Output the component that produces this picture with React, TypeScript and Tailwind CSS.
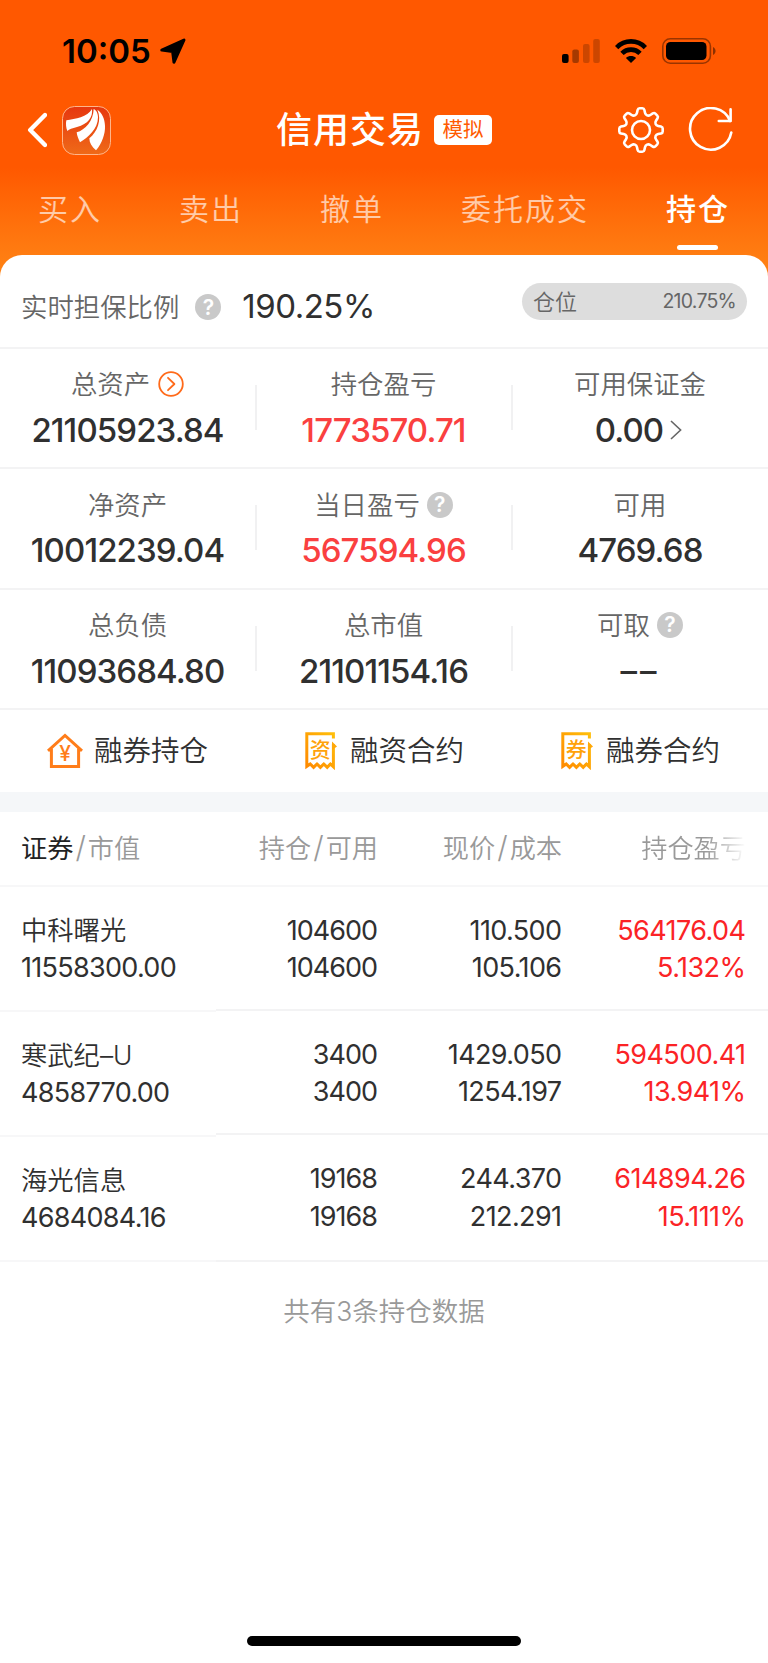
import { ReactNode } from 'react';

const TABS = [
  { id: 'buy', label: '买入' },
  { id: 'sell', label: '卖出' },
  { id: 'cancel', label: '撤单' },
  { id: 'orders', label: '委托成交' },
  { id: 'positions', label: '持仓' },
] as const;

type Stat = { label: string; value: string; red?: boolean; help?: boolean; detail?: boolean; more?: boolean };

const STATS: Stat[][] = [
  [
    { label: '总资产', value: '21105923.84', detail: true },
    { label: '持仓盈亏', value: '1773570.71', red: true },
    { label: '可用保证金', value: '0.00', more: true },
  ],
  [
    { label: '净资产', value: '10012239.04' },
    { label: '当日盈亏', value: '567594.96', red: true, help: true },
    { label: '可用', value: '4769.68' },
  ],
  [
    { label: '总负债', value: '11093684.80' },
    { label: '总市值', value: '21101154.16' },
    { label: '可取', value: '––', help: true },
  ],
];

const HOLDINGS = [
  { name: '中科曙光', value: '11558300.00', qty: '104600', avail: '104600', price: '110.500', cost: '105.106', pnl: '564176.04', pct: '5.132%' },
  { name: '寒武纪–U', value: '4858770.00', qty: '3400', avail: '3400', price: '1429.050', cost: '1254.197', pnl: '594500.41', pct: '13.941%' },
  { name: '海光信息', value: '4684084.16', qty: '19168', avail: '19168', price: '244.370', cost: '212.291', pnl: '614894.26', pct: '15.111%' },
];

// eight-toothed gear outline around 0,0
function gearPath() {
  const parts: string[] = [];
  for (let i = 0; i < 8; i++) {
    const a = (i * Math.PI) / 4;
    const p = (x: number, y: number, rot = a) =>
      `${(x * Math.cos(rot) - y * Math.sin(rot)).toFixed(2)} ${(x * Math.sin(rot) + y * Math.cos(rot)).toFixed(2)}`;
    const next = a + Math.PI / 4;
    parts.push(`${i === 0 ? 'M' : 'L'}${p(-4, -17.2)}`);
    parts.push(`L${p(-3.4, -20)} Q${p(-3, -21.7)} ${p(-1.4, -21.7)} L${p(1.4, -21.7)} Q${p(3, -21.7)} ${p(3.4, -20)} L${p(4, -17.2)}`);
    parts.push(`C${p(4.6, -14.6)} ${p(-4.6, -14.6, next)} ${p(-4, -17.2, next)}`);
  }
  return parts.join(' ') + 'Z';
}

function HelpIcon() {
  return (
    <span className="flex size-[26px] items-center justify-center rounded-full bg-[#c9c9c9] text-[21px] leading-none font-semibold text-white">
      ?
    </span>
  );
}

function BrandLogo() {
  return (
    <svg className="ml-[15px] size-[49px]" viewBox="186 318 147 147">
      <defs>
        <linearGradient id="brand" x1="0" y1="0" x2="0" y2="1">
          <stop offset="0" stopColor="#e6370f" />
          <stop offset="1" stopColor="#ef6a18" />
        </linearGradient>
      </defs>
      <rect x="187.5" y="319.5" width="144" height="144" rx="36" fill="url(#brand)" stroke="#ffb58a" strokeWidth="3" />
      <g fill="#fff">
        <path d="M199 361C226 356 262 352 276 327C279 352 264 372 231 381C216 385 208 388 202 393C198 385 197 370 199 361Z" />
        <path d="M281 327C280 362 256 390 230 397C231 408 236 418 240 427C264 412 294 387 294 352C294 340 289 330 281 327Z" />
        <path d="M292 329C306 360 292 395 268 415C268 428 275 440 288 451C306 430 316 402 315 377C314 355 306 338 292 329Z" />
      </g>
    </svg>
  );
}

function StatusBar() {
  return (
    <div className="flex h-[102px] items-center justify-between pr-[52px] pl-[62px] text-black">
      <div className="flex items-center">
        <span className="text-[33px] leading-none font-semibold">10:05</span>
        <svg className="ml-[9px] size-[26px]" viewBox="0 0 26 26">
          <path d="M24 2L14 24.2L12.6 13.4L1.8 12Z" fill="#000" stroke="#000" strokeWidth="3" strokeLinejoin="round" />
        </svg>
      </div>
      <div className="flex items-center">
        <svg className="h-6 w-[38px]" viewBox="0 0 38 24">
          <rect x="0" y="15" width="6.6" height="9" rx="2" />
          <rect x="10.3" y="10.5" width="6.6" height="13.5" rx="2" opacity="0.35" />
          <rect x="21" y="5" width="6.6" height="19" rx="2" opacity="0.2" />
          <rect x="31.2" y="0" width="6.6" height="24" rx="2" opacity="0.2" />
        </svg>
        <svg className="ml-[15px] h-6 w-8" viewBox="0 0 32 24" fill="none" stroke="#000" strokeWidth="4.7">
          <path d="M1.6 8.6C9.6.4 22.4.4 30.4 8.6" />
          <path d="M7 14.4C12 9.4 20 9.4 25 14.4" />
          <path d="M16 24L10.9 18.9C13.8 16.3 18.2 16.3 21.1 18.9Z" fill="#000" stroke="none" />
        </svg>
        <svg className="ml-[15px] h-[26px] w-[54px]" viewBox="0 0 54 26">
          <rect x="0.8" y="0.8" width="47.6" height="24.4" rx="7.5" fill="none" stroke="#000" strokeOpacity="0.4" strokeWidth="1.6" />
          <rect x="4" y="4" width="40.5" height="18" rx="4.5" />
          <path d="M51 9C54.4 10.6 54.4 15.4 51 17Z" opacity="0.45" />
        </svg>
      </div>
    </div>
  );
}

function TitleBar() {
  return (
    <div className="flex h-14 items-center pr-[33px] pl-[27px]">
      <svg className="h-9 w-5" viewBox="0 0 20 36" fill="none" stroke="#fff" strokeWidth="4.4" strokeLinecap="round" strokeLinejoin="round">
        <path d="M18 3L3.2 18L18 33" />
      </svg>
      <BrandLogo />
      <h1 className="ml-[165px] text-[36px] leading-none font-medium tracking-[1px] whitespace-nowrap text-white">信用交易</h1>
      <span className="ml-[10px] flex h-[30px] w-[58px] items-center justify-center rounded-[5px] bg-white text-[20.5px] leading-none text-[#ff5a00]">
        模拟
      </span>
      <svg className="ml-[126px] size-[46px]" viewBox="-23 -23 46 46" fill="none" stroke="#fff" strokeWidth="2.6" strokeLinejoin="round">
        <path d={gearPath()} />
        <circle r="9" />
      </svg>
      <svg className="ml-6 h-[46px] w-[46px]" viewBox="-22.5 -23 46 46" fill="none" stroke="#fff" strokeWidth="2.6" strokeLinecap="round" strokeLinejoin="round">
        <path d="M20.8 2.6A20.8 20.8 0 1 1 19.6 -9" />
        <path d="M20.1 -20.6V-9H8.3" />
      </svg>
    </div>
  );
}

function TabBar() {
  return (
    <nav className="flex h-[97px] items-start justify-between pt-[33px] pr-[40px] pl-[38px]">
      {TABS.map((tab) => (
        <div key={tab.id} className="flex flex-col items-center">
          <span
            className={`-mr-[2px] text-[30px] leading-[36px] tracking-[2px] whitespace-nowrap ${
              tab.id === 'positions' ? 'font-medium text-white' : 'font-[350] text-white/65'
            }`}
          >
            {tab.label}
          </span>
          {tab.id === 'positions' && <span className="mt-[18px] h-[5px] w-[41px] rounded-full bg-white" />}
        </div>
      ))}
    </nav>
  );
}

function StatCell({ stat }: { stat: Stat }) {
  return (
    <div className="flex flex-1 flex-col items-center pt-[20.4px]">
      <div className="flex h-[30px] items-center text-[26.4px] leading-[30px] font-[350] text-[#666]">
        {stat.label}
        {stat.detail && (
          <svg className="ml-[8px] size-[26px]" viewBox="0 0 26 26" fill="none" stroke="#ff6a1a" strokeWidth="1.8" strokeLinecap="round" strokeLinejoin="round">
            <circle cx="13" cy="13" r="11.8" />
            <path d="M10 6.8L16.4 13L10 19.2" />
          </svg>
        )}
        {stat.help && (
          <span className="ml-[7px]">
            <HelpIcon />
          </span>
        )}
      </div>
      <div
        className={`mt-[12.6px] flex h-[36px] items-center text-[33px] leading-[36px] font-medium ${
          stat.value === '––' ? 'tracking-[3px]' : 'tracking-[-0.9px]'
        } ${stat.red ? 'text-[#fa4040]' : 'text-[#303030]'}`}
      >
        {stat.value}
        {stat.more && (
          <svg className="mr-[3px] ml-[7px] h-5 w-3" viewBox="0 0 12 20" fill="none" stroke="#666" strokeWidth="1.6">
            <path d="M1 1L10.6 10L1 19" />
          </svg>
        )}
      </div>
    </div>
  );
}

function ReceiptIcon({ char }: { char: string }) {
  return (
    <svg className="h-[38px] w-8" viewBox="0 0 32 38">
      <defs>
        <linearGradient id={`receipt-${char}`} x1="0" y1="1" x2="1" y2="0">
          <stop offset="0" stopColor="#ff8a00" />
          <stop offset="1" stopColor="#ffbe0a" />
        </linearGradient>
      </defs>
      <g fill="none" stroke={`url(#receipt-${char})`} strokeWidth="3">
        <path d="M28.4 6.5V1.8H1.8V34.4L5.2 32L8.6 35.4L12 32L15.4 35.4L18.8 32L22.2 35.4L25.4 32L28.4 34.8V12" />
      </g>
      <path d="M27 9.5L32 14.5L27 18Z" fill="#ffa808" />
      <text x="15.2" y="24.6" textAnchor="middle" fontSize="21" fontWeight="500" fill="#ffa20a">
        {char}
      </text>
    </svg>
  );
}

function HouseIcon() {
  return (
    <svg className="h-[36px] w-9" viewBox="0 0 36 36" fill="none" stroke="#ff7d1a" strokeWidth="3">
      <path d="M1 17.8L18 2.4L35 17.8" />
      <path d="M4.4 15.5V33.4H31.6V15.5" />
      <text x="18" y="27.5" textAnchor="middle" fontSize="21" fontWeight="500" fill="#ff7d1a" stroke="none">
        ¥
      </text>
    </svg>
  );
}

function Shortcut({ icon, label }: { icon: ReactNode; label: string }) {
  return (
    <div className="flex w-64 items-center pl-[46px]">
      <span className="flex w-[37px] justify-center">{icon}</span>
      <span className="ml-[11px] text-[28.5px] leading-none font-[350] whitespace-nowrap text-[#303030]">{label}</span>
    </div>
  );
}

function Cell({ top, bottom, className }: { top: string; bottom: string; className: string }) {
  return (
    <div className={`flex flex-col text-right text-[27px] leading-[37.3px] ${className}`}>
      <span>{top}</span>
      <span>{bottom}</span>
    </div>
  );
}

function Slash() {
  return <span className="mx-[2px] text-[30px] leading-none font-light">/</span>;
}

function Holdings() {
  return (
    <section>
      <div className="flex h-[75px] items-center border-b-2 border-[#f7f7f8] pt-[2px] text-[26.2px] leading-[34px] font-[350] text-[#999]">
        <div className="w-[216px] pl-[21px]">
          <span className="font-normal text-[#222]">证券</span>
          <Slash />
          市值
        </div>
        <div className="w-[162px] text-right">
          持仓
          <Slash />
          可用
        </div>
        <div className="w-[184px] text-right">
          现价
          <Slash />
          成本
        </div>
        <div className="w-[184px] bg-linear-to-r from-[#999] from-78% to-white bg-clip-text text-right text-transparent">
          持仓盈亏
        </div>
      </div>
      <div className="flex text-[#303030]">
        <div className="w-[216px]">
          {HOLDINGS.map((h) => (
            <div key={h.name} className="flex h-[125px] flex-col border-b-2 border-[#f7f7f8] pt-[25px] pl-[21px] leading-[37.3px]">
              <span className="text-[26.3px] font-[350]">{h.name}</span>
              <span className="text-[27px] tracking-[-0.7px]">{h.value}</span>
            </div>
          ))}
        </div>
        <div className="flex-1">
          {HOLDINGS.map((h) => (
            <div key={h.name} className="flex h-[124.2px] border-b-2 border-[#f3f3f4] pt-[25px] last:h-[126.6px]">
              <Cell top={h.qty} bottom={h.avail} className="w-[161px] tracking-[-1px]" />
              <Cell top={h.price} bottom={h.cost} className="w-[184.5px] tracking-[-0.6px]" />
              <Cell top={h.pnl} bottom={h.pct} className="w-[184px] tracking-[-0.55px] text-[#fb2326]" />
            </div>
          ))}
        </div>
      </div>
    </section>
  );
}

export default function App() {
  return (
    <main
      lang="zh-CN"
      className="flex h-[1663px] w-[768px] flex-col overflow-hidden bg-[#ff5800] bg-linear-to-b from-[#ff5800] from-[168px] to-[#ff8214] to-[270px] font-[Inter,'Noto_Sans_CJK_SC',sans-serif]"
    >
      <StatusBar />
      <TitleBar />
      <TabBar />

      <div className="flex flex-1 flex-col rounded-t-[22px] bg-white">
        {/* Collateral ratio */}
        <div className="flex h-[94px] items-start border-b-2 border-[#f3f3f4] pr-[21px] pl-[21px]">
          <span className="mt-[37px] text-[26.4px] leading-[30px] font-[350] text-[#666]">实时担保比例</span>
          <span className="mt-[39px] ml-[16px]">
            <HelpIcon />
          </span>
          <span className="mt-[33px] ml-[21px] text-[33px] leading-[36px] tracking-[-0.5px] text-[#303030]">190.25%</span>
          <div className="mt-[28px] ml-auto flex h-[37px] w-[225px] items-center justify-between rounded-full bg-[#ddd] pr-[11px] pl-[11px] leading-none text-[#666]">
            <span className="text-[22px] font-[350]">仓位</span>
            <span className="text-[19.5px] tracking-[-0.75px]">210.75%</span>
          </div>
        </div>

        {/* Account totals */}
        {STATS.map((row, i) => (
          <div key={i} className="flex h-[120.3px] border-b-2 border-[#f3f3f4]">
            {row.map((stat, j) => (
              <div key={stat.label} className="flex w-64">
                <StatCell stat={stat} />
                {j < 2 && <span className="mt-[36px] -mr-px h-[45px] w-[2px] bg-[#f1f1f2]" />}
              </div>
            ))}
          </div>
        ))}

        <div className="flex h-[82px] items-center">
          <Shortcut icon={<HouseIcon />} label="融券持仓" />
          <Shortcut icon={<ReceiptIcon char="资" />} label="融资合约" />
          <Shortcut icon={<ReceiptIcon char="券" />} label="融券合约" />
        </div>
        <div className="h-5 bg-[#f5f7f9]" />

        <Holdings />

        <p className="mt-[34px] text-center text-[26.5px] leading-[30px] font-[350] text-[#999]">共有3条持仓数据</p>

        <div className="mt-auto mb-[17px] h-[10px] w-[274px] self-center rounded-full bg-black" />
      </div>
    </main>
  );
}
